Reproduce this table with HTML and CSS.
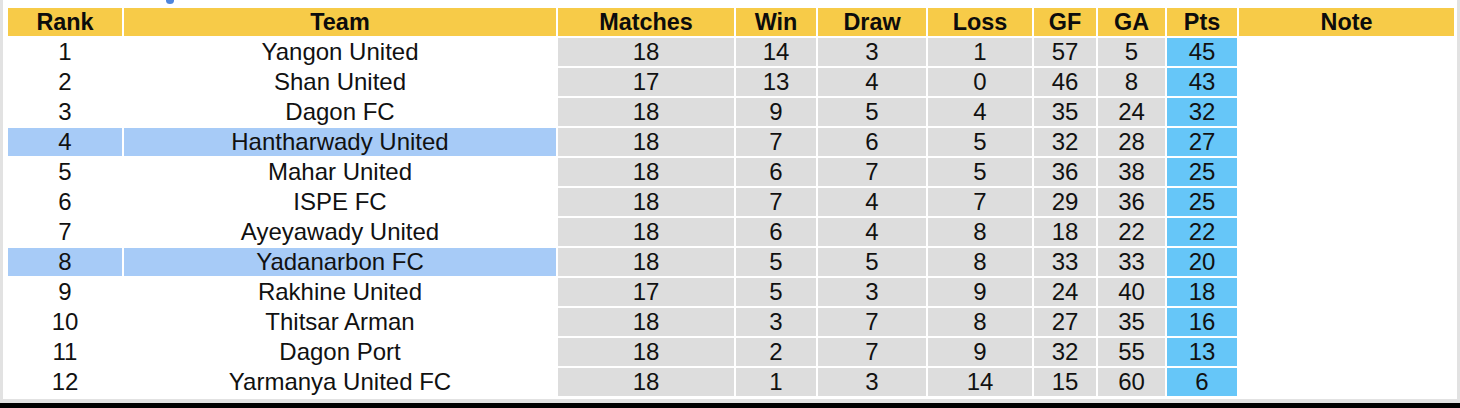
FILE: index.html
```html
<!DOCTYPE html>
<html>
<head>
<meta charset="utf-8">
<link rel="stylesheet" href="styles.css">
</head>
<body>
<div class="frame">
  <span class="dot"></span>
  <div class="standings">
    <div class="h">Rank</div><div class="h">Team</div><div class="h">Matches</div><div class="h">Win</div><div class="h">Draw</div><div class="h">Loss</div><div class="h">GF</div><div class="h">GA</div><div class="h">Pts</div><div class="h">Note</div>

    <div class="c">1</div><div class="c">Yangon United</div><div class="c g">18</div><div class="c g">14</div><div class="c g">3</div><div class="c g">1</div><div class="c g">57</div><div class="c g">5</div><div class="c p">45</div><div class="c"></div>
    <div class="c">2</div><div class="c">Shan United</div><div class="c g">17</div><div class="c g">13</div><div class="c g">4</div><div class="c g">0</div><div class="c g">46</div><div class="c g">8</div><div class="c p">43</div><div class="c"></div>
    <div class="c">3</div><div class="c">Dagon FC</div><div class="c g">18</div><div class="c g">9</div><div class="c g">5</div><div class="c g">4</div><div class="c g">35</div><div class="c g">24</div><div class="c p">32</div><div class="c"></div>
    <div class="c hl">4</div><div class="c hl">Hantharwady United</div><div class="c g">18</div><div class="c g">7</div><div class="c g">6</div><div class="c g">5</div><div class="c g">32</div><div class="c g">28</div><div class="c p">27</div><div class="c"></div>
    <div class="c">5</div><div class="c">Mahar United</div><div class="c g">18</div><div class="c g">6</div><div class="c g">7</div><div class="c g">5</div><div class="c g">36</div><div class="c g">38</div><div class="c p">25</div><div class="c"></div>
    <div class="c">6</div><div class="c">ISPE FC</div><div class="c g">18</div><div class="c g">7</div><div class="c g">4</div><div class="c g">7</div><div class="c g">29</div><div class="c g">36</div><div class="c p">25</div><div class="c"></div>
    <div class="c">7</div><div class="c">Ayeyawady United</div><div class="c g">18</div><div class="c g">6</div><div class="c g">4</div><div class="c g">8</div><div class="c g">18</div><div class="c g">22</div><div class="c p">22</div><div class="c"></div>
    <div class="c hl">8</div><div class="c hl">Yadanarbon FC</div><div class="c g">18</div><div class="c g">5</div><div class="c g">5</div><div class="c g">8</div><div class="c g">33</div><div class="c g">33</div><div class="c p">20</div><div class="c"></div>
    <div class="c">9</div><div class="c">Rakhine United</div><div class="c g">17</div><div class="c g">5</div><div class="c g">3</div><div class="c g">9</div><div class="c g">24</div><div class="c g">40</div><div class="c p">18</div><div class="c"></div>
    <div class="c">10</div><div class="c">Thitsar Arman</div><div class="c g">18</div><div class="c g">3</div><div class="c g">7</div><div class="c g">8</div><div class="c g">27</div><div class="c g">35</div><div class="c p">16</div><div class="c"></div>
    <div class="c">11</div><div class="c">Dagon Port</div><div class="c g">18</div><div class="c g">2</div><div class="c g">7</div><div class="c g">9</div><div class="c g">32</div><div class="c g">55</div><div class="c p">13</div><div class="c"></div>
    <div class="c">12</div><div class="c">Yarmanya United FC</div><div class="c g">18</div><div class="c g">1</div><div class="c g">3</div><div class="c g">14</div><div class="c g">15</div><div class="c g">60</div><div class="c p">6</div><div class="c"></div>
  </div>
</div>
<div class="base"></div>
</body>
</html>
```

FILE: styles.css
```css
html, body {
  margin: 0;
  padding: 0;
  background: #ffffff;
}
body {
  width: 1460px;
  height: 408px;
  overflow: hidden;
  font-family: "Liberation Sans", Arial, sans-serif;
  color: #111111;
}
.frame {
  position: relative;
  height: 391px;
  padding: 8px 3px 0 5px;
  border-left: 3px solid #e2e2e2;
  border-right: 3px solid #e2e2e2;
  background: #ffffff;
}
.dot {
  position: absolute;
  left: 163px;
  top: -3px;
  width: 8px;
  height: 7px;
  border-radius: 50%;
  background: #4f86dc;
}
.standings {
  display: grid;
  grid-template-columns: 114px 432px 176px 80px 108px 104px 62px 67px 70px 215px;
  grid-auto-rows: 28px;
  gap: 2px;
}
.h {
  background: #f7cb48;
  font-weight: bold;
  font-size: 23.4px;
  display: flex;
  align-items: center;
  justify-content: center;
  color: #0c0c0c;
}
.c {
  font-size: 24px;
  display: flex;
  align-items: center;
  justify-content: center;
}
.g {
  background: #dddddd;
}
.p {
  background: #66c6f8;
}
.hl {
  background: #a7cbf7;
}
.base {
  height: 4px;
  background: #e2e2e2;
  border-bottom: 5px solid #000000;
}
```
